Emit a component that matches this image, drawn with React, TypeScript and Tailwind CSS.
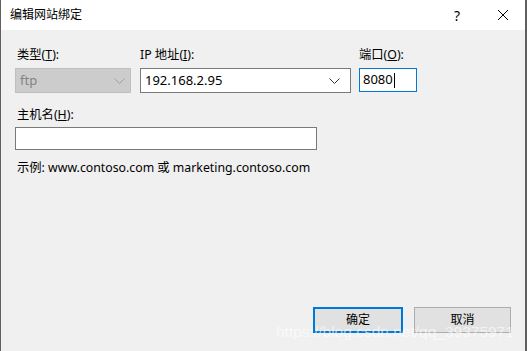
import React from 'react';

const ui = { fontFamily: '"Noto Sans", "Noto Sans CJK SC", sans-serif' };

function Chevron({ color }: { color: string }) {
  return (
    <svg width="11" height="6" viewBox="0 0 11 6" className="shrink-0">
      <polyline points="0.5,0.5 5.5,5.5 10.5,0.5" fill="none" stroke={color} strokeWidth="1" />
    </svg>
  );
}

export default function App() {
  return (
    <div
      style={ui}
      className="relative w-[527px] h-[351px] flex flex-col overflow-hidden border-l border-r-2 border-[#5f5f5f] text-[12.3px] text-black"
    >
      {/* title bar */}
      <div className="h-[30px] bg-white flex items-center shrink-0">
        <span className="pl-[9px] text-[12px]">编辑网站绑定</span>
        <span className="ml-auto mr-[37px] text-[14px]">?</span>
        <svg width="12" height="12" viewBox="0 0 12 12" className="mr-[16px]">
          <path d="M1 1L11 11M11 1L1 11" stroke="#000" strokeWidth="1" />
        </svg>
      </div>

      {/* body */}
      <div className="flex-1 bg-[#f0f0f0] flex flex-col pl-[14px] pt-[17px]">
        <div className="flex">
          <div className="w-[116px] flex flex-col">
            <span className="h-[16px] leading-[16px] pl-[2px]">
              类型(<span className="underline">T</span>):
            </span>
            <div className="mt-[5px] h-[25px] bg-[#cccccc] border border-[#bfbfbf] flex items-center pl-[4px] pr-[5px]">
              <span className="text-[13px] text-[#838383]">ftp</span>
              <span className="ml-auto"><Chevron color="#a0a0a0" /></span>
            </div>
          </div>
          <div className="w-[211px] ml-[9px] flex flex-col">
            <span className="h-[16px] leading-[16px]">
              IP 地址(<span className="underline">I</span>):
            </span>
            <div className="mt-[5px] h-[25px] bg-white border border-[#7a7a7a] flex items-center pl-[4px] pr-[10px]">
              <span className="text-[13px]">192.168.2.95</span>
              <span className="ml-auto"><Chevron color="#333" /></span>
            </div>
          </div>
          <div className="w-[58px] ml-[8px] flex flex-col">
            <span className="h-[16px] leading-[16px]">
              端口(<span className="underline">O</span>):
            </span>
            <div className="mt-[5px] h-[24px] bg-white border border-[#0078d7] flex items-center pl-[3px]">
              <span className="text-[13px]">8080</span>
              <span className="w-px h-[15px] bg-black ml-[1px]" />
            </div>
          </div>
        </div>

        <span className="mt-[14px] h-[16px] leading-[16px] pl-[2px]">
          主机名(<span className="underline">H</span>):
        </span>
        <div className="mt-[4px] w-[302px] h-[23px] bg-white border border-[#7a7a7a]" />

        <span className="mt-[10px] h-[16px] leading-[16px] pl-[2px]">
          示例: www.contoso.com 或 marketing.contoso.com
        </span>

        <div className="mt-auto mb-[18px] flex justify-end pr-[14px] gap-[11px]">
          <button className="w-[90px] h-[26px] bg-[#e1e1e1] border-2 border-[#0078d7] text-[12px]">确定</button>
          <button className="w-[97px] h-[26px] bg-[#e1e1e1] border border-[#adadad] text-[12px]">取消</button>
        </div>
      </div>

      {/* watermark */}
      <span
        style={{ fontFamily: '"Liberation Sans", Arial, sans-serif' }}
        className="absolute left-[275px] top-[323px] text-[15.5px] leading-[18px] text-white/60 whitespace-nowrap pointer-events-none"
      >
        https://blog.csdn.net/qq_39375971
      </span>
    </div>
  );
}
